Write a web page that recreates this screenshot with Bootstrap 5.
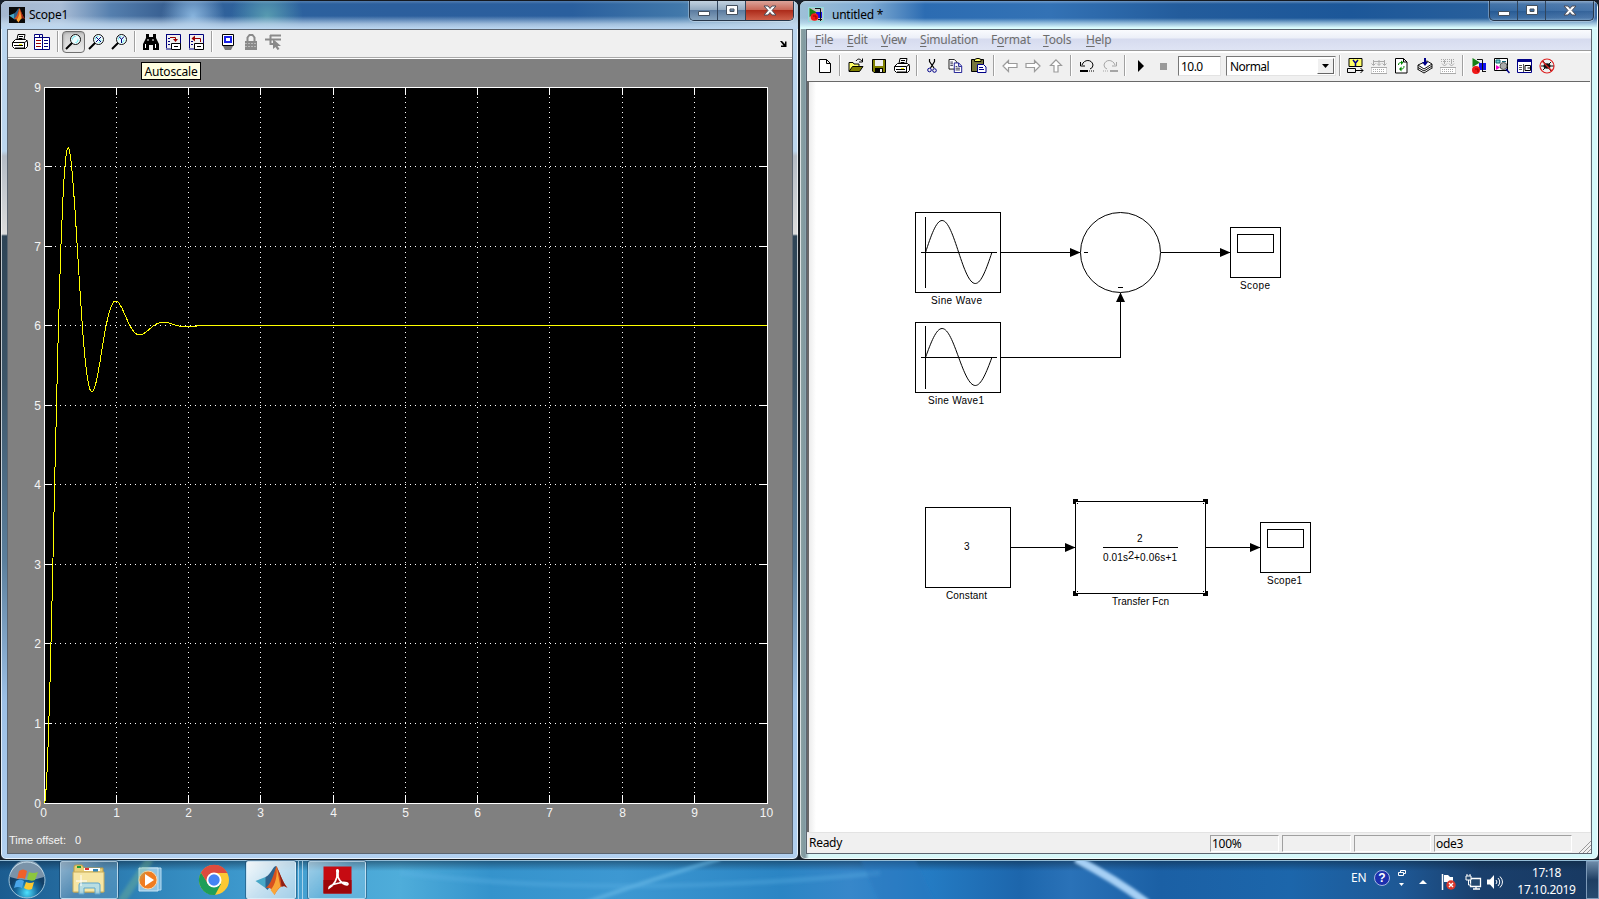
<!DOCTYPE html>
<html lang="en">
<head>
<meta charset="utf-8">
<title>Scope1</title>
<link href="https://cdn.jsdelivr.net/npm/bootstrap@5.3.0/dist/css/bootstrap.min.css" rel="stylesheet">
<style>
html,body{height:100%}
body{width:1599px;height:899px;overflow:hidden;background:#18202b;font:12px/16px "Noto Sans",sans-serif;color:#000}
svg{display:block;flex:none}
.desk{height:860px}
.win{border:1px solid #15191f;border-radius:7px 7px 6px 6px;box-shadow:inset 0 0 0 1px #ffffffb0;overflow:hidden}
.win-scope{width:799px;padding:0 5px 5px 6px;background:linear-gradient(#b9d5ef 0,#bcd6ee 150px,#b4bcc6 155px,#dcdcdc 233px,#2e4456 235px,#3c5568 380px,#5b7f9c 560px,#9cc0e6 700px,#b2d0f0 100%)}
.win-model{width:800px;padding:0 6px 5px 6px;background:linear-gradient(90deg,#8fa5a4 0,#7f98a0 5px,#d8f7f8 9px,#d5f8fa 100%)}
.bar-title{height:28px;margin:0 -5px 0 -6px;padding-left:8px;font-size:12px;letter-spacing:-.25px}
.name{padding-top:6px}
.logo{margin-top:6px}
.win-scope .bar-title{background:linear-gradient(#ffffff30 0,#fff0 3px,#fff0 15px,#c6dcf0c0 23px,#bdd8f2 28px),radial-gradient(circle at 192px 15px,#87b3dc 0,#87b3dc00 32px),radial-gradient(circle at 266px 15px,#579ab0 0,#579ab000 36px),linear-gradient(90deg,#a5b8d0 0,#a9bdd6 60px,#557fae 110px,#375f91 165px,#2c629f 250px,#2c5f9d 390px,#2a5f9e 570px,#4178aa 680px,#86a7c2 760px,#adc7dc 100%)}
.win-model .bar-title{background:linear-gradient(#ffffff50 0,#fff0 3px,#fff0 17px,#bfe0f0b0 22px,#ddfdfe 27px),linear-gradient(90deg,#9ec0d8 0,#7fabd3 70px,#2c6cb2 125px,#3372b5 250px,#235c9c 380px,#1c5799 550px,#29609c 700px,#3c6ca4 100%)}
.caps{height:20px;margin-right:4px;border:1px solid #26364a;border-top:0;border-radius:0 0 5px 5px;overflow:hidden;box-shadow:0 0 0 1px #ffffff50}
.win-model .caps{margin-right:3px}
.caps>div{width:28px;border-right:1px solid #31455c;background:linear-gradient(#c3d2e0,#91a9c0 48%,#5c7ca0 50%,#86a3bd)}
.caps>div:last-child{width:47px;border:0;background:linear-gradient(#dca49a,#c86655 48%,#ad2c1b 50%,#cf604a)}
.win-model .caps>div,.win-model .caps>div:last-child{background:linear-gradient(#ffffff28,#ffffff10 50%,#0d2b5520 52%,#ffffff20)}
.pane{border:1px solid #5c6570;background:#f0f0f0}
.tools{height:27px;padding-bottom:4px}
.tools-model{height:29px;border-top:1px solid #fff;padding:0 0 3px 6px}
.tool{width:23px;height:22px;display:flex;align-items:center;justify-content:center;flex:none}
.tool-on{border:1px solid #707070;border-radius:4px;background:linear-gradient(#c9c9c9,#ededed);box-shadow:inset 1px 1px 2px #8888}
.sepv{width:8px;height:21px;flex:none;background:linear-gradient(90deg,transparent 3px,#a0a0a0 3px,#a0a0a0 4px,#fff 4px,#fff 5px,transparent 5px)}
.scope-area{background:#808080;border-top:1px solid #a9a9a9;box-shadow:inset 0 1px #fff}
.tip{left:141px;top:62px;width:60px;height:18px;border:1px solid #000;background:#ffffe1;line-height:17px;letter-spacing:-.2px;text-align:center}
.menus{height:20px;display:grid;grid-template-columns:32px 34px 39px 71px 52px 43px auto;padding-left:8px;color:#6d6d6d;background:linear-gradient(#fafbfe,#eceff8 40%,#d6dbef 45%,#dfe4f4);line-height:20px;letter-spacing:-.2px}
.menus u{text-underline-offset:2px}
.under{height:2px;background:#9b9b9b;border-bottom:1px solid #fff}
.field{height:20px;border:1px solid #777;border-right-color:#e3e3e3;border-bottom-color:#e3e3e3;background:#fff;line-height:19px;letter-spacing:-.55px}
.field-time{width:43px;margin-left:3px;padding-left:2px}
.field-mode{width:110px;margin-left:5px;padding-left:3px}
.drop{width:17px;height:16px;margin:1px;background:#f0f0f0;border:1px solid #fff;border-right-color:#666;border-bottom-color:#666}
.model-view{border:solid #696969;border-width:1px 0 0 2px;margin-right:1px;background:linear-gradient(90deg,#ececec,#fff 7px)}
.status{height:21px;border-top:1px solid #e3e3e3;padding:2px 19px 1px 2px;gap:3px;letter-spacing:-.3px}
.cell{height:17px;border:1px solid #a0a0a0;border-right-color:#fff;border-bottom-color:#fff;line-height:16px;padding-left:1px}
.c1{width:69px}.c3{width:77px}.c4{width:138px}
.task{height:39px;border-top:1px solid #94bcd6;color:#fff;background:linear-gradient(#0d253c80,#0d253c00 10px),linear-gradient(90deg,#1b5c90 0,#246a9e 60px,#2f83b8 140px,#3d98cc 240px,#4fadda 400px,#3593cc 490px,#3d98d2 620px,#2b85c4 780px,#3787ca 850px,#247bc3 930px,#1d66ac 1020px,#2a72b8 1070px,#1b60a5 1160px,#1c66ab 1290px,#1e5895 1400px,#1a3f6c 1480px,#183961 1599px)}
.streaks{left:0;top:0}
.tbtn{height:38px;border:1px solid #d3e9f6b0;outline:1px solid #12355470;border-radius:2px;background:linear-gradient(135deg,#ffffff80,#ffffff30 50%,#ffffff20)}
.orb{width:60px;padding-left:8px}.b-exp{width:58px}.b-wmp{width:61px;margin-left:2px}.b-chr{width:65px}
.b-mat{width:50px;background:linear-gradient(135deg,#fffffff0,#e4f0f8d0 50%,#cfe5f3b0)}
.stack3{width:7px;border-right:1px solid #d3e9f6b0;background:linear-gradient(90deg,transparent 2px,#d3e9f6b0 2px,#d3e9f6b0 3px,transparent 3px)}
.b-pdf{width:58px;margin-left:5px}
.tray{height:34px}
.lang{width:22px;font-size:12px;letter-spacing:-.2px}
.clock{width:79px;line-height:17px;letter-spacing:-.3px;padding-top:3px}
.peek{width:13px;height:38px;border:1px solid #7d9ab8;background:linear-gradient(#6d8aa8,#1e3e62 50%,#274b70)}
</style>
</head>
<body>
<svg width="0" height="0" class="position-absolute">
<defs>
<g id="i-print"><path d="M5 5.500 6 .5h7l-1 5M3.500 5.500h10l2 2v5l-2 2h-11l-2-2v-4zM.5 8.500h12l3-2M12.500 8.500v5.500" fill="#fff" stroke="#000"/><path d="M7 2.500h4M6.500 4.500h4M2 11.500h9" stroke="#000"/><path d="M7 10.500h3" stroke="#ee0"/><path d="M3 14h10" stroke="#000"/></g>
<g id="i-copy"><path d="M.5.500h6l3 3v8h-9z" fill="#fff" stroke="#000"/><path d="M6.500 4.500h5l3.500 3.500v7.500h-8.500zM11.500 4.500v4h3" fill="#fff" stroke="#008"/><path d="M2 3.500h3M2 5.500h3M2 7.500h3M8 8.500h2M8 10.500h5M8 12.500h5" stroke="#224"/></g>
<g id="i-mag"><circle cx="10.500" cy="5.500" r="5" fill="#effeff" stroke="#111"/><path d="M7.500 5.500c0-2 1-3 3-3M13 5.500c0 2-1 3-2.500 3" stroke="#57e6ee" fill="none"/><path d="M7 9 1 15" stroke="#000" stroke-width="2"/></g>
<g id="i-model"><path d="M.5.500h15v14H.5z" fill="#c0c4c4" stroke="#8fdede"/><path d="M1.500 1v9L9 5.500z" fill="#168016"/><path d="M8 5h6v6H8z" fill="#11e"/><path d="M7 1.500h5.500V14M10 12.500h4" stroke="#111" fill="none"/><circle cx="6.500" cy="10" r="3.800" fill="#f01818"/><path d="M5 9h3v3" stroke="#900" fill="none"/></g>
<g id="i-blk"><path d="M1.500 0v9L9 4.500z" fill="#168016"/><path d="M8 5h7v7H8z" fill="#11e"/><path d="M6 1.500h5.500V14M11 13.500h4" stroke="#111" fill="none"/><circle cx="5" cy="12" r="4" fill="#f01818"/><path d="M4 11h3v3" stroke="#900" fill="none"/></g>
<g id="i-mat"><path d="M0 8.500 5 6.500 8 10 5 12z" fill="#47a7c7"/><path d="M5 6.500C8 5 8.500 1 10.500 1L9 9l-3 4-1-1z" fill="#2e638d"/><path d="M10.500 1C12 4 13.500 9 16 12c-2-2-4-1-6.500 3.500C9 13 7.500 11.500 5 12c3-2 4-7 5.500-11z" fill="#d8511e"/><path d="M10.500 1c.5 5-.5 9-3 12l2 2.500c1-2 2-3.500 3-4z" fill="#f9a638"/><path d="M10.500 1C12 4 13.500 9 16 12c-1.300-1-2-1-3-.6C12.800 7 11.500 4 10.500 1z" fill="#8e1f16"/></g>
<g id="i-min"><path d="M1.500 7.500h11v4h-11z" fill="#fff" stroke="#44505e"/></g>
<g id="i-max"><path d="M2.500 1.500h11v9h-11zM6 5h4v2.500H6z" fill="#fff" fill-rule="evenodd" stroke="#44505e"/></g>
<g id="i-x"><path d="M2 1h4l2 2.500L10 1h4l-4 4.500 4 4.500h-4L8 7.500 6 10H2l4-4.500z" fill="#fff" stroke="#4d4d58"/></g>
<g id="i-build"><path d="M0 9.500h16v6H0z" fill="#fff" stroke="#aaa"/><path d="M2 11.500h12M2 13.500h12" stroke="#aaa" stroke-dasharray="1 1"/></g>
</defs>
</svg>

<div class="desk d-flex position-relative">
 <section class="win win-scope d-flex flex-column">
  <header class="bar-title d-flex align-items-start">
   <svg class="logo me-1" width="16" height="16" viewBox="0 0 16 16"><path d="M0 0h16v16H0z" fill="#0a0a0a"/><use href="#i-mat"/></svg>
   <span class="name flex-grow-1">Scope1</span>
   <div class="caps d-flex">
    <div class="d-flex justify-content-center align-items-center"><svg width="14" height="14"><use href="#i-min"/></svg></div>
    <div class="d-flex justify-content-center align-items-center"><svg width="16" height="13"><use href="#i-max"/></svg></div>
    <div class="d-flex justify-content-center align-items-center"><svg width="16" height="12"><use href="#i-x"/></svg></div>
   </div>
  </header>
  <div class="pane flex-grow-1 d-flex flex-column">
   <div class="tools d-flex align-items-center">
    <div class="tool"><svg width="16" height="16"><use href="#i-print"/></svg></div>
    <div class="tool"><svg width="17" height="16"><path d="M.5 2.500v-2h5v3h10v12H.5z" fill="#fff" stroke="#00007c"/><path d="M.5 3.500h8v12M5.500.5h3v3" stroke="#00007c" fill="none"/><path d="M2 6.500h5M2 9.500h5M2 12.500h5" stroke="#900"/><path d="M10 6.500h4M10 9.500h4M10 12.500h4" stroke="#00007c"/></svg></div>
    <i class="sepv"></i>
    <div class="tool tool-on"><svg width="17" height="16"><use href="#i-mag"/></svg></div>
    <div class="tool"><svg width="17" height="16"><use href="#i-mag"/><path d="m8 3 5 5m0-5-5 5" stroke="#00007c"/></svg></div>
    <div class="tool"><svg width="17" height="16"><use href="#i-mag"/><path d="m8 2.500 2.500 3L13 2.500M10.500 5v4" stroke="#00007c" fill="none"/></svg></div>
    <i class="sepv"></i>
    <div class="tool"><svg width="16" height="16"><path d="M3 0h3v3h4V0h3v4l3 6v6h-6v-5H6v5H0v-6l3-6z"/><path d="M2.500 10v4M12.500 10v4M5 5v2M10 5v2" stroke="#fff"/></svg></div>
    <div class="tool"><svg width="17" height="16"><path d="M1.500 1v13M1 .5h14.500v10M1 15h5" stroke="#00007c" fill="none"/><path d="M3 4.500h2M3 7.500h2M3 10.500h2" stroke="#00007c"/><path d="M5 3.500h5.500V7" stroke="#900" fill="none"/><path d="M8 5h5l-2.500 3z" fill="#900"/><path d="M6.500 9.500h9v6h-9z" fill="#fff" stroke="#000"/><path d="M9 12.500h4" stroke="#000"/></svg></div>
    <div class="tool"><svg width="17" height="16"><path d="M1.500 1v13M1 .5h14.500v10M1 15h5" stroke="#00007c" fill="none"/><path d="M3 7.500h2M3 10.500h2" stroke="#00007c"/><path d="M6 4.500h6.500V8" stroke="#900" fill="none"/><path d="M7 1.500v6L3.500 4.500z" fill="#900"/><path d="M6.500 9.500h9v6h-9z" fill="#fff" stroke="#000"/><path d="M9 12.500h4" stroke="#000"/></svg></div>
    <i class="sepv"></i>
    <div class="tool"><svg width="16" height="16"><path d="M2.500.5h11v11h-11z" fill="#fff" stroke="#000"/><path d="M4 2h8v7H4z" fill="#1a22e8"/><path d="M6 4h4v3H6z" fill="#fff"/><path d="M3 12h10l-2 4H5z" fill="#777"/></svg></div>
    <div class="tool"><svg width="14" height="16"><path d="M3.500 7V3.500L5.500 1h3l2 2.500V7" fill="none" stroke="#8a8a8a" stroke-width="2"/><path d="M1 7h12v9H1z" fill="#8a8a8a"/><path d="M1 9.500h12M1 12.500h12" stroke="#b8b8b8" stroke-dasharray="2 1"/></svg></div>
    <div class="tool"><svg width="17" height="16"><path d="M0 5.500h16M5 1.500h11M5.500 1v9H9" stroke="#8a8a8a" stroke-width="2" fill="none"/><path d="M8 5v10l2.500-2 2 3 2-1-2-3H16z" fill="#8a8a8a"/></svg></div>
    <svg class="ms-auto me-1 mt-1" width="9" height="8"><path d="M1 1h2l3 3V1.500h1.500V7H2V5.500h2.500z" fill="#000"/></svg>
   </div>
   <div class="scope-area flex-grow-1">
    <svg id="plot" width="784" height="794" viewBox="8 58 784 794" font-family="Liberation Sans, sans-serif" font-size="12" fill="#f4f4f4">
     <path d="M44.500 87.500h723v716h-723z" fill="#000" stroke="#fff" shape-rendering="crispEdges"/>
     <text x="9" y="844" font-size="11" textLength="57">Time offset:</text><text x="75" y="844" font-size="11">0</text>
    </svg>
   </div>
  </div>
 </section>
 <div class="tip position-absolute">Autoscale</div>
 <section class="win win-model d-flex flex-column ms-auto">
  <header class="bar-title d-flex align-items-start">
   <svg class="logo me-2" width="16" height="16"><use href="#i-model"/></svg>
   <span class="name flex-grow-1">untitled *</span>
   <div class="caps d-flex">
    <div class="d-flex justify-content-center align-items-center"><svg width="14" height="14"><use href="#i-min"/></svg></div>
    <div class="d-flex justify-content-center align-items-center"><svg width="16" height="13"><use href="#i-max"/></svg></div>
    <div class="d-flex justify-content-center align-items-center"><svg width="16" height="12"><use href="#i-x"/></svg></div>
   </div>
  </header>
  <div class="pane flex-grow-1 d-flex flex-column">
   <nav class="menus"><span><u>F</u>ile</span><span><u>E</u>dit</span><span><u>V</u>iew</span><span><u>S</u>imulation</span><span>F<u>o</u>rmat</span><span><u>T</u>ools</span><span><u>H</u>elp</span></nav>
   <div class="under"></div>
   <div class="tools-model d-flex align-items-center">
    <div class="tool"><svg width="12" height="14"><path d="M.5.500h7l4 4v9H.5zM7.500.5v4h4" fill="#fff" stroke="#000"/></svg></div>
    <i class="sepv"></i>
    <div class="tool"><svg width="16" height="15"><path d="M1 13V4.500h4l1 1.500h5v3" fill="#ff6" stroke="#000"/><path d="M1 13.500 4.500 8.500H15L11.500 13.500z" fill="#808000" stroke="#000"/><path d="M8 3c2-3 4-2 6 0M14.500.5v3.500H11" stroke="#000" fill="none"/></svg></div>
    <div class="tool"><svg width="14" height="14"><path d="M.5.500h13v13H2l-1.500-1.500z" fill="#808000" stroke="#000"/><path d="M3 1h8v6H3z" fill="#f0f0f0"/><path d="M3 9h8v5H3z"/><path d="M8 10h2v3H8z" fill="#eee"/></svg></div>
    <div class="tool"><svg width="16" height="15"><use href="#i-print"/></svg></div>
    <i class="sepv"></i>
    <div class="tool"><svg width="11" height="14"><path d="M2.500 0v2.500L7 9M7.500 0v2.500L3.500 9" stroke="#000" fill="none" stroke-width="1.200"/><circle cx="2.500" cy="11" r="1.800" fill="none" stroke="#008"/><circle cx="7.500" cy="11.500" r="1.800" fill="none" stroke="#008"/></svg></div>
    <div class="tool"><svg width="16" height="14" viewBox="0 0 17 16"><use href="#i-copy"/></svg></div>
    <div class="tool"><svg width="16" height="15"><path d="M.5 1.500h12v12H.5z" fill="#77773c" stroke="#000"/><path d="M3.500 3.500v-2L6 .5h2l2 1v2z" fill="#ff6" stroke="#000"/><path d="M6.500 6.500h6l2.500 2.500v5.500H6.500z" fill="#fff" stroke="#008"/><path d="M8 9.500h4M8 11.500h5" stroke="#008"/></svg></div>
    <i class="sepv"></i>
    <div class="tool"><svg width="16" height="14"><path d="M1 7 6.500 1.500v3H15v4H6.500v4z" fill="#fff" stroke="#9b9b9b" stroke-width="1.200"/></svg></div>
    <div class="tool"><svg width="16" height="14"><path d="M15 7 9.500 1.500v3H1v4h8.500v4z" fill="#fff" stroke="#9b9b9b" stroke-width="1.200"/></svg></div>
    <div class="tool"><svg width="14" height="14"><path d="M7 .8 12.500 6.500H9V13H5V6.500H1.500z" fill="#fff" stroke="#9b9b9b" stroke-width="1.200"/></svg></div>
    <i class="sepv"></i>
    <div class="tool"><svg width="16" height="14"><path d="M3 6c2-6 10-6 11 0q0 3-3 4M1.500 3v4H6" stroke="#000" fill="none"/><path d="M1 12h8" stroke="#000" stroke-width="2"/><path d="M10 12h6" stroke="#000" stroke-dasharray="1 1"/></svg></div>
    <div class="tool"><svg width="16" height="14"><path d="M13 6C11 0 3 0 2 6q0 3 3 4M14.500 3v4H10" stroke="#a5a5a5" fill="none"/><path d="M8 12h8" stroke="#a5a5a5" stroke-width="2"/><path d="M1 12h6" stroke="#a5a5a5" stroke-dasharray="1 1"/></svg></div>
    <i class="sepv"></i>
    <div class="tool"><svg width="8" height="12"><path d="M1 0v12l6-6z"/></svg></div>
    <div class="tool"><svg width="8" height="8"><path d="M0 1h7v7H0z" fill="#999"/></svg></div>
    <div class="field field-time">10.0</div>
    <div class="field field-mode d-flex"><span class="flex-grow-1">Normal</span><div class="drop d-flex align-items-center justify-content-center"><svg width="7" height="4"><path d="M0 0h7L3.500 4z"/></svg></div></div>
    <i class="sepv"></i>
    <div class="tool"><svg width="17" height="16"><path d="M2 .5h13v8H2z" fill="#ff6" stroke="#000"/><path d="m6 2 2.500 3L11 2M8.500 4.500V8" stroke="#008" fill="none" stroke-width="1.500"/><path d="M.5 10.500h8v4h-8zM9 12.500h7M13.500 10l2.500 2.500-2.500 2.500" stroke="#000" fill="none"/></svg></div>
    <div class="tool"><svg width="16" height="16"><use href="#i-build"/><path d="M2.500 2v5M8 2v5M13.500 2v5M.5 5.500l2 2 2-2M6 5.500l2 2 2-2M11.500 5.500l2 2 2-2M2 3.500h12" fill="none" stroke="#aaa"/></svg></div>
    <div class="tool"><svg width="13" height="16"><path d="M.5.500h8l3.500 3.500v11H.5zM8.500.5V4H12" fill="#fff" stroke="#000"/><path d="M3.500 7c0-2 1-2.500 3-2.500M9 8c0 2.500-1 3-3 3" stroke="#080" fill="none"/><path d="M6 2.500 8.500 4.500 6 7zM6.500 8.500v5L4 11z" fill="#080"/></svg></div>
    <div class="tool"><svg width="16" height="16"><path d="m1 11.500 6 3.500 8-5M1 9.500l6 3.500 8-5M1 7l6 4 8-5-5-3zM1 7v5M15 6v4.500" fill="#fff" stroke="#111"/><path d="M8 0v5" stroke="#008" stroke-width="2"/><path d="M5 4h6L8 8z" fill="#008"/></svg></div>
    <div class="tool"><svg width="16" height="16"><use href="#i-build"/><path d="M1 1.500h14M1 3.500h14" stroke="#aaa" stroke-dasharray="1 1"/><path d="M4.500 2v4M11.500 2v4M2 5.500l2.500 2.500L7 5.500M9 5.500l2.500 2.500L14 5.500" fill="none" stroke="#aaa"/></svg></div>
    <i class="sepv"></i>
    <div class="tool"><svg width="16" height="16"><use href="#i-blk"/></svg></div>
    <div class="tool"><svg width="16" height="16"><path d="M.5.500h13v12H.5z" fill="#fff" stroke="#000"/><path d="M2 2h4v3H2zM8 3.500h4" fill="#7cc" stroke="#167"/><path d="m2 7 4 2.500L2 12z" fill="#e0c"/><circle cx="9.500" cy="8" r="3.500" fill="#aaa" stroke="#555"/><path d="m12 11 3.500 4" stroke="#008" stroke-width="1.500"/></svg></div>
    <div class="tool"><svg width="15" height="14"><path d="M.5.500h14v13H.5z" fill="#fff" stroke="#008"/><path d="M1 2h13" stroke="#008" stroke-width="2"/><path d="M2 6.500h3M2 8.500h3M2 10.500h3M6.500 5v8" stroke="#555"/><path d="M8 6.500h5.500v5H8zM10.500 9H13" stroke="#000" fill="none"/></svg></div>
    <div class="tool"><svg width="17" height="16"><ellipse cx="8" cy="8" rx="3.500" ry="2.800" fill="#111"/><path d="M4 3l8 10M12 4 4 12M2 8h13" stroke="#111"/><circle cx="8" cy="8" r="7" fill="none" stroke="#d22" stroke-width="1.200"/><path d="m3 3 10 10" stroke="#d22" stroke-width="1.200"/></svg></div>
   </div>
   <div class="model-view flex-grow-1">
    <svg width="780" height="748" viewBox="809 82 780 748" fill="none" stroke="#000" font-family="Liberation Sans, sans-serif" font-size="10">
     <g><path d="M915.500 212.500h85v80h-85zM925.500 217v71M921 252.500h76" shape-rendering="crispEdges"/><path d="M925.500 252.500c5.400-16.400 10.600-32 16.600-32s11.200 15.600 16.600 32 10.600 31 16.600 31 11.200-15 16.600-31"/></g>
     <g><path d="M915.500 322.500h85v70h-85zM925.500 326v63M921 357.500h76" shape-rendering="crispEdges"/><path d="M925.500 357.500c5.400-14.800 10.600-29 16.600-29s11.200 14.200 16.600 29 10.600 28 16.600 28 11.200-13.500 16.600-28"/></g>
     <circle cx="1120.500" cy="252.500" r="40"/>
     <path d="M1001 252.500h79M1161 252.500h69M1001 357.500h119.500V293M1084 252.500h4M1118 287.500h5M1230.500 227.500h50v50h-50zM1237.500 234.500h36v18h-36zM925.500 507.500h85v80h-85zM1011 547.500h64M1075.500 501.500h130v92h-130zM1206 547.500h54M1103 547.500h75M1260.500 522.500h50v50h-50zM1267.500 529.500h36v18h-36z" shape-rendering="crispEdges"/>
     <g fill="#000" stroke="none">
      <path d="M1070 248v9l10.500-4.500zM1220 248v9l10.500-4.500zM1116 302h9l-4.500-9.500zM1065 543v9l10.500-4.500zM1250 543v9l10.500-4.500z"/>
      <path d="M1073 499h5v5h-5zM1203 499h5v5h-5zM1073 591h5v5h-5zM1203 591h5v5h-5z"/>
      <path d="M1076 502h1v2h-1zM1077 502h1v1h-1zM1204 502h1v2h-1zM1203 502h1v1h-1zM1076 591h1v2h-1zM1077 592h1v1h-1zM1204 591h1v2h-1zM1203 592h1v1h-1z" fill="#fff"/>
      <text x="931" y="304" textLength="51">Sine Wave</text><text x="928" y="404" textLength="56">Sine Wave1</text>
      <text x="1240" y="289" textLength="30">Scope</text><text x="964" y="550">3</text><text x="946" y="599" textLength="41">Constant</text>
      <text x="1137" y="542">2</text><text x="1103" y="561" textLength="25">0.01s</text><text x="1128" y="559" font-size="11">2</text><text x="1134" y="561" textLength="43">+0.06s+1</text>
      <text x="1112" y="605" textLength="57">Transfer Fcn</text><text x="1267" y="584" textLength="35">Scope1</text>
     </g>
    </svg>
   </div>
   <footer class="status d-flex position-relative"><span class="flex-grow-1">Ready</span><div class="cell c1">100%</div><div class="cell c1"></div><div class="cell c3"></div><div class="cell c4">ode3</div>
    <svg class="position-absolute end-0 bottom-0" width="13" height="13"><path d="M1 13 13 1M5 13l8-8M9 13l4-4" stroke="#999"/></svg></footer>
  </div>
 </section>
</div>

<footer class="task d-flex position-relative">
 <svg class="streaks position-absolute" width="1599" height="38"><defs><filter id="soft"><feGaussianBlur stdDeviation="1.600"/></filter></defs><g filter="url(#soft)" fill="none"><path d="M1076-2Q1115 18 1147 42" stroke="#a6d0f5" stroke-width="8"/><path d="M585 42Q640 22 720-2" stroke="#6cbce890" stroke-width="4"/><path d="M400 12q220 26 480 0" stroke="#5fb4e450" stroke-width="5"/><path d="M860-2l20 44h55L915-2z" fill="#2876bd60"/><path d="M120 42 150-2" stroke="#8ac68a50" stroke-width="8"/></g></svg>
 <div class="orb d-flex align-items-center"><svg width="38" height="38" viewBox="-19 -19 38 38"><defs><radialGradient id="og" cy=".85"><stop stop-color="#4ee2ff"/><stop offset=".6" stop-color="#16679c"/><stop offset="1" stop-color="#123f66"/></radialGradient></defs><circle r="18" fill="url(#og)" stroke="#9fc4da"/><path d="M-17-3A17 17 0 0 1 17-3Q0 3-17-3z" fill="#ffffff70"/><path d="M-8-9q4-3 8 0L-2-1q-4-2-8 0z" fill="#f0602a"/><path d="M2-8q4 2 9 0L8 0Q4 2 0-1z" fill="#8cc63e"/><path d="M-11 1q4-3 8 0L-5 8q-4-2-8 0z" fill="#4aa5e8"/><path d="M-1 2q4 2 8 0L5 9q-4 2-8-1z" fill="#fdc82f"/></svg></div>
 <div class="tbtn b-exp d-flex align-items-center justify-content-center"><svg width="34" height="32"><path d="M2 3q0-2 2-2h6l2 3h19v24H2z" fill="#e9cf78" stroke="#b99b46"/><path d="M5 2h4v2H5z" fill="#1a9b34"/><path d="M12 4h16v3H12z" fill="#fff"/><path d="M13 4h4v2h-4z" fill="#d33"/><path d="M21 5h5v3h-5z" fill="#38b"/><path d="M1 8h31v20H1z" fill="#f6e6a5" stroke="#c7ac5a"/><path d="M7 30V21q0-2 2-2h17q2 0 2 2v9h-5v-6H12v6z" fill="#a9daf0d0" stroke="#5fa5cb"/><path d="M9 11v11M4 17h11" stroke="#fff"/></svg></div>
 <div class="b-wmp d-flex align-items-center justify-content-center"><svg width="30" height="28"><path d="M6 2h19v22H6z" fill="#78b6db" stroke="#b9dcf0"/><path d="M3 2h19v23H3z" fill="#92c5e4" stroke="#c9e4f4"/><circle cx="12" cy="14" r="9" fill="#f07c20" stroke="#ffd7a8"/><path d="M9 8v12l9-6z" fill="#fff"/></svg></div>
 <div class="b-chr d-flex align-items-center justify-content-center"><svg width="32" height="32" viewBox="-16 -16 32 32"><circle r="15" fill="#fcc934"/><path d="M-13-7.500A15 15 0 0 0 1 15L7 4-6 3.500z" fill="#1e9e58"/><path d="M-13-7.500A15 15 0 0 1 13.500-7H0L-6 4z" fill="#dd4b3e"/><circle r="7.500" fill="#fff"/><circle r="5.700" fill="#4484f3"/></svg></div>
 <div class="tbtn b-mat d-flex align-items-center justify-content-center"><svg width="33" height="32" viewBox="0 0 16 16"><use href="#i-mat"/></svg></div>
 <div class="stack3"></div>
 <div class="tbtn b-pdf d-flex align-items-center justify-content-center"><svg width="29" height="28"><path d="M.5.500h28v27H.5z" fill="#c60b12"/><path d="M.5 14h28v13.500H.5z" fill="#9d0509"/><path d="M6 22c5-3 9-9 8-16-1-3 2-3 1 1-1 5 3 11 9 12 3-1-1-4-8-2-5 1-10 3-10 5z" fill="none" stroke="#fff" stroke-width="1.700"/></svg></div>
 <div class="tray d-flex align-items-center ms-auto">
  <span class="lang">EN</span>
  <svg width="18" height="18" viewBox="0 0 18 18"><circle cx="9" cy="9" r="7.500" fill="#1c2fae" stroke="#a8b8e0"/><text x="9" y="13" text-anchor="middle" font-family="Liberation Sans, sans-serif" font-size="12" font-weight="bold" fill="#fff">?</text></svg>
  <svg class="ms-1 me-1" width="16" height="20"><path d="M3.500 4.500h5v3h-5zM5.500 4V2.500h5v3H9" fill="none" stroke="#fff"/><path d="M4 15h5l-2.500 3z" fill="#fff"/></svg>
  <svg class="mx-1 mt-2" width="8" height="6"><path d="m0 5 4-4 4 4z" fill="#fff"/></svg>
  <svg class="ms-2 mt-2" width="18" height="18"><path d="M3.500 1v16" stroke="#fff" stroke-width="1.500"/><path d="M5 2h4l2 2h3v6H9L8 9H5z" fill="#fff"/><circle cx="12" cy="12" r="4.700" fill="#dc392d"/><path d="m10 10 4 4m0-4-4 4" stroke="#fff" stroke-width="1.400"/></svg>
  <svg class="ms-2 mt-2" width="17" height="18"><path d="M5.500 5.500h10v8h-10zM8 16h7M11 14v2" fill="#24486f" stroke="#fff" stroke-width="1.300"/><path d="M1 3h5v4H1zM2 1v2M5 1v2M3.500 7v5H6" fill="#24486f" stroke="#fff"/></svg>
  <svg class="ms-1 mt-2" width="17" height="16"><path d="M1 5.500h3L8 1v14l-4-4.500H1z" fill="#fff"/><path d="M10 6q2 2 0 4M12 4q3.500 4 0 8M14 2.500q5 5.500 0 11" stroke="#fff" fill="none"/></svg>
  <div class="clock text-center align-self-start ms-1">17:18<br>17.10.2019</div>
  <div class="peek align-self-start"></div>
 </div>
</footer>

<script>
// Unit step of amplitude 3 through 2 / (0.01 s^2 + 0.06 s + 1)
const NS = 'http://www.w3.org/2000/svg', plot = document.getElementById('plot');
const X = t => 44.3 + 72.3 * t, Y = v => 803 - 716 / 9 * v;
function add(tag, attrs, text) {
  const e = document.createElementNS(NS, tag);
  for (const k in attrs) e.setAttribute(k, attrs[k]);
  if (text !== undefined) e.textContent = text;
  plot.appendChild(e);
}
const snap = n => Math.floor(n) + .5;
let grid = '', ticks = '';
for (let i = 0; i <= 10; i++) {
  const x = snap(X(i) - .5);
  if (i > 0 && i < 10) { grid += `M${x} 87V803`; ticks += `M${x} 88v7M${x} 803v-8`; }
  add('text', {x, y: 817, 'text-anchor': 'middle'}, i);
}
for (let i = 0; i <= 9; i++) {
  const y = snap(Y(i));
  if (i > 0 && i < 9) { grid += `M45 ${y}H767`; ticks += `M45 ${y}h7M767 ${y}h-8`; }
  add('text', {x: 41, y: y + 4, 'text-anchor': 'end'}, i);
}
add('path', {d: grid, stroke: '#fff', 'stroke-dasharray': '1 4', 'shape-rendering': 'crispEdges'});
add('path', {d: ticks, stroke: '#fff', 'shape-rendering': 'crispEdges'});
const wd = Math.sqrt(91), pts = [];
for (let t = 0; t <= 10; t += .01) {
  const v = 6 * (1 - Math.exp(-3 * t) * (Math.cos(wd * t) + 3 / wd * Math.sin(wd * t)));
  pts.push(X(t).toFixed(1) + ',' + (t > 2.1 ? snap(Y(6)) : Y(v).toFixed(1)));
}
add('polyline', {points: pts.join(' '), fill: 'none', stroke: '#ff0', 'shape-rendering': 'crispEdges'});
</script>
<script src="https://cdn.jsdelivr.net/npm/bootstrap@5.3.0/dist/js/bootstrap.bundle.min.js"></script>
</body>
</html>
